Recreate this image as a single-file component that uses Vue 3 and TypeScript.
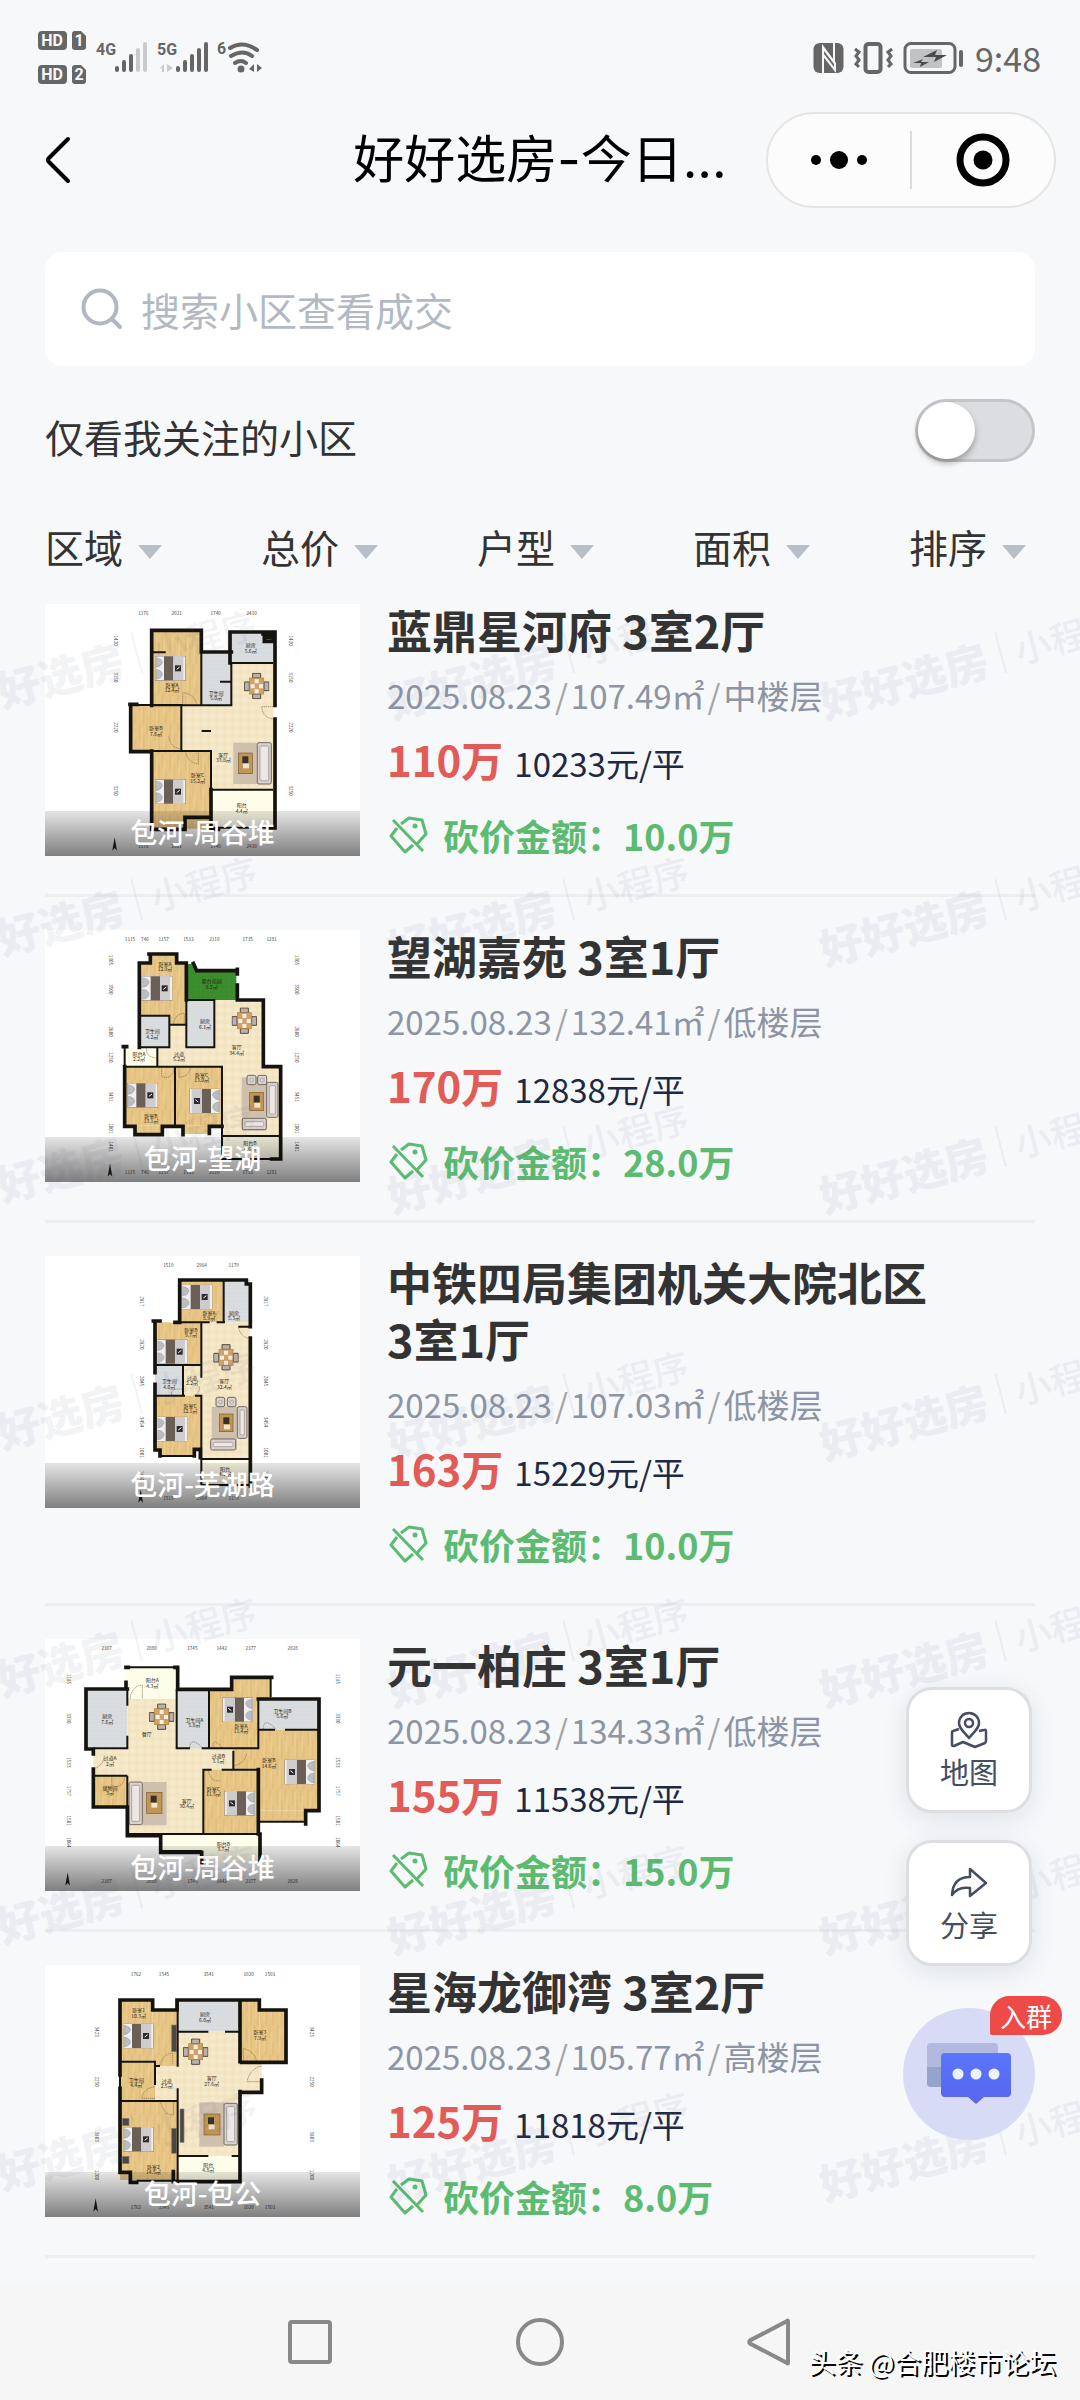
<script setup lang="ts">
import { ref } from 'vue'

type Box = [number, number, number, number]
type Room = [Box, 'wood' | 'tile' | 'stone' | 'ivory' | 'grass']

interface Plan {
  rooms: Room[]
  walls: string
  thin: string
  beds: [number, number, boolean][]
  table: [number, number]
  rug: Box
  coffee: Box
  sofas: Box[]
  extras?: Box[]
  notes: [number, number, string, string][]
  top: [number, string][]
  side: [number, string][]
  sideX: [number, number]
  doors: string
}

interface Listing {
  name: string
  area: string
  size: string
  floor: string
  price: string
  unit: string
  cut: string
  plan: Plan
}

const filters = ['区域', '总价', '户型', '面积', '排序']
const onlyFollowed = ref(false)
const keyword = ref('')

const listings: Listing[] = [
  {
    name: '蓝鼎星河府 3室2厅', area: '包河-周谷堆', size: '107.49㎡', floor: '中楼层', price: '110', unit: '10233', cut: '10.0',
    plan: {
      rooms: [
        [[320, 79, 149, 225], 'wood'], [[469, 144, 90, 160], 'tile'], [[555, 87, 130, 90], 'tile'],
        [[559, 177, 125, 130], 'stone'], [[409, 304, 275, 253], 'stone'], [[257, 301, 152, 140], 'wood'],
        [[320, 441, 178, 233], 'wood'], [[498, 557, 186, 114], 'ivory'],
      ],
      walls: 'M320 304V79H469V144H559M555 177V84H690V304M690 345V672M320 441V676H420V640H490M257 301V443H320M498 557V676H520M690 672H670M255 301H275M654 90H684V112H658V100H684',
      thin: 'M469 144V304H559V177H684M469 304H320M257 303H409V441H320M320 145H362M525 233H559M409 441H498V640M498 381H470M498 557H684M498 671H684',
      beds: [[330, 156, false], [330, 526, false]],
      table: [635, 246], rug: [565, 416, 72, 124], coffee: [580, 447, 42, 62], sofas: [[637, 416, 42, 124]],
      notes: [[381, 249, '卧室A', '12.4㎡'], [333, 379, '卧室B', '7.6㎡'], [458, 520, '卧室C', '15.2㎡'], [513, 272, '卫生间', '5.0㎡'], [617, 130, '厨房', '5.6㎡'], [535, 458, '客厅', '33.8㎡'], [590, 610, '阳台', '4.4㎡']],
      top: [[295, '1176'], [395, '2021'], [512, '1740'], [620, '2410']],
      side: [[110, '1420'], [220, '3150'], [370, '2220'], [560, '3250']],
      sideX: [206, 733],
      doors: 'M413 304V266Q450 270 455 304M409 435Q372 430 372 395M460 441V480Q425 475 422 441M684 308H650Q652 340 684 345',
    },
  },
  {
    name: '望湖嘉苑 3室1厅', area: '包河-望湖', size: '132.41㎡', floor: '低楼层', price: '170', unit: '12838', cut: '28.0',
    plan: {
      rooms: [
        [[283, 97, 141, 190], 'wood'], [[316, 72, 79, 30], 'wood'], [[424, 120, 150, 90], 'grass'], [[424, 102, 26, 30], 'grass'],
        [[283, 257, 90, 95], 'tile'], [[373, 284, 51, 126], 'stone'], [[337, 352, 316, 58], 'stone'], [[508, 210, 145, 200], 'stone'],
        [[424, 210, 84, 142], 'tile'], [[239, 352, 98, 58], 'ivory'], [[239, 410, 151, 177], 'wood'], [[390, 410, 141, 177], 'wood'],
        [[270, 587, 82, 25], 'wood'], [[414, 587, 79, 25], 'wood'], [[531, 410, 176, 208], 'stone'], [[531, 618, 176, 69], 'ivory'],
      ],
      walls: 'M283 352V99H316V72M312 72H395V99H424V210M445 100L455 122H577M577 118V132M577 165V210H655V410H707V687H680M239 410V589H270V614H352V589H414V614M493 610V589H531M235 350H245',
      thin: 'M283 257H373V352H283M424 210H508V352H424ZM373 284H424M239 352V410H531V618H707M390 410V587M337 352V410M531 618V687H707',
      beds: [[290, 138, false], [247, 459, false], [433, 476, true]],
      table: [598, 272], rug: [590, 442, 75, 160], coffee: [614, 487, 41, 55], sofas: [[665, 457, 34, 105], [592, 565, 72, 34], [606, 436, 27, 28], [638, 436, 27, 28]],
      notes: [[360, 108, '卧室A', '12.9㎡'], [500, 160, '露台花园', '8.2㎡'], [322, 310, '卫生间', '4.2㎡'], [480, 280, '厨房', '6.1㎡'], [575, 358, '客厅', '34.4㎡'], [282, 377, '阳台A', '2.2㎡'], [402, 377, '过道', '5.2㎡'], [318, 563, '卧室B', '13.1㎡'], [470, 440, '卧室C', '13.0㎡'], [615, 646, '阳台B', '4.6㎡']],
      top: [[255, '1115'], [300, '746'], [356, '1157'], [430, '1533'], [508, '2110'], [608, '1735'], [680, '1281']],
      side: [[90, '1305'], [178, '3500'], [305, '2600'], [382, '1250'], [500, '3451'], [595, '1001'], [650, '1401']],
      sideX: [192, 750],
      doors: 'M385 284Q390 250 418 250V284M350 410V440Q385 450 388 410M402 412V442Q432 440 436 412M305 352Q300 380 335 385',
    },
  },
  {
    name: '中铁四局集团机关大院北区 3室1厅', area: '包河-芜湖路', size: '107.03㎡', floor: '低楼层', price: '163', unit: '15229', cut: '10.0',
    plan: {
      rooms: [
        [[404, 72, 132, 127], 'wood'], [[536, 72, 78, 127], 'tile'], [[330, 199, 139, 128], 'wood'], [[330, 327, 84, 92], 'tile'],
        [[414, 327, 55, 92], 'stone'], [[330, 419, 139, 160], 'wood'], [[345, 577, 103, 24], 'wood'], [[469, 199, 145, 410], 'stone'], [[469, 609, 145, 78], 'ivory'],
      ],
      walls: 'M404 199V72H604V84H616V212M616 246V690M325 195H345M404 199H390M330 199V350M330 385V582H345V600M448 600V580H466V605',
      thin: 'M404 72V199H494M515 199H540M536 72V199M330 327H469V199M469 327V365M414 327V419M330 419H420M450 419H469V687M469 609H614M469 687H614M345 600H448M580 212H614',
      beds: [[410, 86, false], [335, 250, false], [335, 482, false]],
      table: [543, 304], rug: [500, 452, 76, 130], coffee: [523, 474, 41, 53], sofas: [[577, 452, 29, 95], [497, 549, 75, 33], [513, 424, 26, 28], [547, 424, 26, 28]],
      notes: [[492, 176, '卧室A', '8.9㎡'], [567, 176, '厨房', '5.3㎡'], [438, 228, '卧室B', '9.7㎡'], [373, 382, '卫生间', '4.0㎡'], [441, 372, '过道', '2.2㎡'], [435, 456, '卧室C', '12.1㎡'], [538, 382, '客厅', '32.4㎡'], [540, 645, '阳台', '4.2㎡']],
      top: [[370, '1519'], [470, '2964'], [566, '1179']],
      side: [[136, '2817'], [265, '2820'], [375, '2045'], [498, '3454'], [590, '1001'], [660, '1440']],
      sideX: [284, 658],
      doors: 'M500 199Q515 175 520 165M580 215Q590 245 614 247M445 419Q468 410 462 390M380 419Q375 395 414 400',
    },
  },
  {
    name: '元一柏庄 3室1厅', area: '包河-周谷堆', size: '134.33㎡', floor: '低楼层', price: '155', unit: '11538', cut: '15.0',
    plan: {
      rooms: [
        [[243, 85, 155, 95], 'ivory'], [[123, 150, 124, 175], 'tile'], [[247, 180, 148, 150], 'stone'], [[247, 325, 228, 260], 'stone'],
        [[145, 330, 102, 80], 'stone'], [[395, 328, 170, 64], 'stone'], [[395, 153, 97, 175], 'tile'], [[492, 153, 148, 175], 'wood'],
        [[560, 115, 117, 65], 'wood'], [[640, 180, 182, 92], 'tile'], [[565, 328, 80, 64], 'wood'], [[640, 272, 182, 243], 'wood'],
        [[643, 515, 137, 33], 'wood'], [[475, 392, 165, 193], 'wood'], [[145, 410, 102, 92], 'wood'], [[347, 585, 296, 55], 'ivory'], [[470, 640, 173, 30], 'ivory'],
      ],
      walls: 'M243 85H250M390 85H398V151H560V115H680M640 180H822V515H782V555M247 150H123V330H145V345M145 390V504H247V590H347V640H470V670M640 585H645V672M398 85V151M243 130V150M640 392V585',
      thin: 'M243 85H398M247 150V200M247 290V328H145M247 410H145M395 151V328H435M470 328H640V180M492 151V328M640 272H690M720 272H822M643 548H780M475 585V392H500M530 392H640M247 410V504M565 335V392M243 585H640M347 636H470M677 115V175',
      beds: [[532, 175, true], [718, 362, true], [538, 456, true]],
      table: [350, 233], rug: [292, 429, 73, 130], coffee: [305, 460, 46, 63], sofas: [[252, 429, 40, 128]],
      notes: [[322, 130, '阳台A', '4.3㎡'], [187, 238, '厨房', '7.6㎡'], [305, 290, '餐厅', ''], [448, 248, '卫生间A', '5.8㎡'], [588, 266, '卧室A', '11.4㎡'], [712, 222, '卫生间B', '5.6㎡'], [195, 364, '过道A', '2㎡'], [195, 452, '储物间', '3㎡'], [520, 356, '过道B', '3.1㎡'], [672, 370, '卧室B', '14.6㎡'], [505, 456, '卧室C', '11.5㎡'], [425, 492, '客厅', '30.4㎡'], [535, 620, '阳台B', '3.7㎡']],
      top: [[185, '2307'], [320, '2880'], [442, '1745'], [530, '1442'], [617, '2377'], [743, '2828']],
      side: [[120, '1185'], [238, '3330'], [370, '1533'], [456, '1757'], [545, '1501'], [610, '1064']],
      sideX: [65, 874],
      doors: 'M255 180Q260 140 292 138V180M145 390Q175 380 178 350M435 325Q435 290 475 328M505 328Q500 290 534 328M490 392Q495 430 525 425M565 380Q600 375 605 342M655 272Q655 230 694 272M200 410V440Q235 450 240 410',
    },
  },
  {
    name: '星海龙御湾 3室2厅', area: '包河-包公', size: '105.77㎡', floor: '高楼层', price: '125', unit: '11818', cut: '8.0',
    plan: {
      rooms: [
        [[225, 105, 98, 190], 'wood'], [[323, 135, 75, 168], 'wood'], [[398, 105, 187, 95], 'tile'], [[585, 105, 58, 185], 'wood'], [[643, 135, 80, 155], 'wood'],
        [[225, 290, 105, 118], 'wood'], [[330, 303, 68, 105], 'stone'], [[398, 200, 187, 373], 'stone'], [[583, 295, 67, 85], 'stone'],
        [[225, 408, 173, 237], 'wood'], [[398, 573, 187, 74], 'ivory'],
      ],
      walls: 'M225 330V105H323V135H396V105H585V290M585 105H643V135H723V292H590M225 370V622H256V652H275M385 650V620M585 380V650H398M650 345V382H585',
      thin: 'M398 105V305M398 370V650M398 200H490M540 200H585M225 290H330V303H345M330 303V360M225 408H398M398 573H490M560 573H585M275 647H398M225 330V370',
      beds: [[234, 176, false], [234, 486, false]],
      table: [452, 260], rug: [463, 412, 74, 133], coffee: [477, 447, 48, 63], sofas: [[537, 415, 40, 125]],
      extras: [[380, 180, 14, 80], [405, 432, 12, 100], [380, 490, 14, 75], [232, 460, 20, 22], [232, 574, 20, 22]],
      notes: [[281, 142, '卧室1', '10.3㎡'], [480, 154, '厨房', '6.0㎡'], [645, 208, '卧室3', '7.9㎡'], [274, 350, '卫生间', '4.4㎡'], [365, 354, '过道', '2.5㎡'], [500, 346, '客厅', '27.6㎡'], [325, 612, '卧室2', '14.5㎡'], [490, 606, '阳台', '4.8㎡']],
      top: [[273, '1762'], [357, '1545'], [491, '3541'], [611, '1020'], [675, '1503']],
      side: [[200, '3423'], [350, '2250'], [515, '3803'], [630, '1200']],
      sideX: [149, 796],
      doors: 'M345 300Q355 265 383 265V300M330 400H290Q295 370 330 365M346 408Q355 450 385 450V408M595 290V250Q630 260 635 290M650 303Q615 310 606 350H650',
    },
  },
]

const fillOf = (kind: string) => `url(#${kind})`
</script>

<template>
  <div class="page">
    <svg class="defs" width="0" height="0" aria-hidden="true">
      <defs>
        <pattern id="wood" width="46" height="90" patternUnits="userSpaceOnUse">
          <rect width="46" height="90" fill="#e6c585" />
          <path d="M8 0V50M20 30V90M31 0V40M40 50V90" stroke="#d6ac66" stroke-width="3" opacity=".5" />
          <path d="M14 10V80M35 20V70" stroke="#efd197" stroke-width="5" opacity=".6" />
        </pattern>
        <pattern id="tile" width="12" height="12" patternUnits="userSpaceOnUse">
          <rect width="12" height="12" fill="#dadde0" />
          <path d="M0 0H12M0 0V12" stroke="#c9cdd1" />
        </pattern>
        <pattern id="stone" width="24" height="24" patternUnits="userSpaceOnUse">
          <rect width="24" height="24" fill="#f5e9cb" />
          <path d="M0 12L12 0L24 12L12 24Z" fill="#f3e3be" />
        </pattern>
        <pattern id="ivory" width="8" height="8" patternUnits="userSpaceOnUse"><rect width="8" height="8" fill="#fefde9" /></pattern>
        <pattern id="grass" width="14" height="14" patternUnits="userSpaceOnUse">
          <rect width="14" height="14" fill="#388a2c" />
          <path d="M2 4L5 1M8 10L11 7M3 12L5 9" stroke="#4ba33b" stroke-width="2" />
        </pattern>
      </defs>
      <symbol id="bed" viewBox="0 0 92 74">
        <rect width="92" height="74" fill="#f1eeee" stroke="#75685f" stroke-width="2" />
        <path d="M3 5Q24 10 22 20Q18 32 3 34ZM3 40Q20 42 22 54Q22 66 3 70Z" fill="#b9bdc4" stroke="#7d7e84" />
        <rect x="27" y="1" width="28" height="72" fill="#6b6058" />
        <rect x="55" y="1" width="30" height="72" fill="#cfccd0" />
        <rect x="60" y="28" width="18" height="18" fill="#2e2a2a" /><path d="M65 40L74 33" stroke="#fff" stroke-width="3" />
      </symbol>
      <symbol id="dining" viewBox="0 0 76 80">
        <path d="M26 2H50V16H26ZM26 64H50V78H26ZM1 28H16V54H1ZM60 28H75V54H60Z" fill="#b9b1aa" stroke="#514840" stroke-width="3" />
        <rect x="17" y="16" width="42" height="48" fill="#cda36a" stroke="#a97e47" stroke-width="2" />
        <path d="M32 20H44V32H32ZM20 35H32V47H20ZM45 35H57V47H45ZM32 50H44V62H32Z" fill="#f8eee0" />
      </symbol>
    </svg>

    <header class="status">
      <svg class="status-left" viewBox="38 32 226 54" width="226" height="54" role="img" aria-label="信号与无线网络">
        <g fill="#666">
          <rect x="38" y="32" width="29" height="19" rx="4" /><path d="M75 32H81L86 37V48Q86 51 83 51H75Q72 51 72 48V35Q72 32 75 32Z" />
          <rect x="38" y="66" width="29" height="19" rx="4" /><path d="M75 66H81L86 71V82Q86 85 83 85H75Q72 85 72 82V69Q72 66 75 66Z" />
        </g>
        <g class="tiny" fill="#f7f8fa">
          <text x="52" y="47" text-anchor="middle">HD</text><text x="79" y="47" text-anchor="middle">1</text>
          <text x="52" y="81" text-anchor="middle">HD</text><text x="79" y="81" text-anchor="middle">2</text>
        </g>
        <g class="net" fill="#666"><text x="96" y="56">4G</text><text x="157" y="56">5G</text><text x="217" y="55">6</text></g>
        <g stroke="#666" stroke-width="4" stroke-linecap="round" fill="none">
          <path d="M117 69V71M124 63V71M131 57V71M178 69V71M185 63V71M192 57V71M199 51V71M206 45V71" />
          <path d="M138 51V71M145 45V71" stroke="#c9cacc" />
          <path d="M230 49Q243 41 257 51M231 57Q243 50 252 57M235 64Q241 60 246 64" stroke-width="4" />
        </g>
        <circle cx="241" cy="70" r="3.5" fill="#666" />
        <path d="M249 70L254 65V73M257 65V73L262 69Z" fill="#666" />
        <path d="M159 70L164 65V73H162V69ZM167 65V73L173 69Z" fill="#c9cacc" />
      </svg>
      <div class="status-right">
        <svg viewBox="814 42 152 32" width="152" height="32" role="img" aria-label="NFC、振动、电量">
          <rect x="814.500" y="43" width="30" height="30" rx="6" fill="#666" />
          <path d="M824 73V48L835 64V43" fill="none" stroke="#f7f8fa" stroke-width="2" />
          <path d="M823 44L837 63V73L823 55Z" fill="#f7f8fa" /><path d="M825 51L835 64V67L825 54Z" fill="#666" />
          <rect x="866.500" y="44" width="15" height="28" rx="3" fill="none" stroke="#666" stroke-width="4" />
          <path d="M856 49L860 52L857 56L860 60L857 64L860 67M893 49L889 52L892 56L889 60L892 64L889 67" fill="none" stroke="#666" stroke-width="3" />
          <rect x="906" y="43.500" width="50" height="29" rx="6" fill="none" stroke="#666" stroke-width="3" />
          <rect x="911" y="49" width="32" height="19" rx="2" fill="#bfc3c3" />
          <path d="M924 57L938 50L936 55H948L935 62L937 57ZM914 63L924 59L922 62H930L921 67L922 63Z" fill="#4b4b4b" />
          <rect x="960" y="50" width="4" height="17" rx="2" fill="#666" />
        </svg>
        <time>9:48</time>
      </div>
    </header>

    <nav class="bar">
      <button class="back" aria-label="返回">
        <svg viewBox="0 0 26 48" width="26" height="48"><path d="M23 3L3.500 22.500Q2 24 3.500 25.500L23 45" fill="none" stroke="#000" stroke-width="4" stroke-linecap="round" /></svg>
      </button>
      <h1>好好选房-今日...</h1>
      <div class="capsule">
        <button aria-label="更多">
          <svg viewBox="0 0 60 20" width="60" height="20"><circle cx="7" cy="10" r="5" /><circle cx="30" cy="10" r="9" /><circle cx="53" cy="10" r="5" /></svg>
        </button>
        <i></i>
        <button aria-label="关闭">
          <svg viewBox="0 0 54 54" width="54" height="54"><circle cx="27" cy="27" r="23" fill="none" stroke="#000" stroke-width="7" /><circle cx="27" cy="27" r="9.500" /></svg>
        </button>
      </div>
    </nav>

    <label class="search">
      <svg viewBox="0 0 42 42" width="42" height="42" aria-hidden="true"><circle cx="19" cy="19" r="16.500" fill="none" stroke="#b0b7c0" stroke-width="4" /><path d="M31 31L39 39" stroke="#b0b7c0" stroke-width="4" stroke-linecap="round" /></svg>
      <input v-model="keyword" type="text" placeholder="搜索小区查看成交" aria-label="搜索小区查看成交" />
    </label>

    <label class="follow">
      <span>仅看我关注的小区</span>
      <input v-model="onlyFollowed" type="checkbox" role="switch" />
    </label>

    <div class="filters">
      <label v-for="f in filters" :key="f">
        <select :aria-label="f"><option>{{ f }}</option></select>
      </label>
    </div>

    <main>
      <ul class="list">
        <li v-for="item in listings" :key="item.name">
          <figure>
            <svg viewBox="0 0 945 756" aria-hidden="true">
              <rect v-for="([b, kind], i) in item.plan.rooms" :key="i" :x="b[0]" :y="b[1]" :width="b[2]" :height="b[3]" :fill="fillOf(kind)" />
              <path :d="item.plan.doors" fill="none" stroke="#7b6a4c" stroke-width="2" stroke-dasharray="4 2" />
              <rect :x="item.plan.rug[0]" :y="item.plan.rug[1]" :width="item.plan.rug[2]" :height="item.plan.rug[3]" fill="#cfc0ae" />
              <g v-for="(s, i) in item.plan.sofas" :key="'s' + i">
                <rect :x="s[0]" :y="s[1]" :width="s[2]" :height="s[3]" rx="5" fill="#d8d0cc" stroke="#746863" stroke-width="3" />
                <rect :x="s[0] + 8" :y="s[1] + 10" :width="s[2] - 16" :height="s[3] - 20" rx="3" fill="#ece7e4" stroke="#958a85" stroke-width="2" />
              </g>
              <rect :x="item.plan.coffee[0]" :y="item.plan.coffee[1]" :width="item.plan.coffee[2]" :height="item.plan.coffee[3]" fill="#bf9653" stroke="#7c5c2c" stroke-width="2" />
              <rect :x="item.plan.coffee[0] + 12" :y="item.plan.coffee[1] + 10" width="18" height="20" fill="#37312a" />
              <rect :x="item.plan.coffee[0] + 14" :y="item.plan.coffee[1] + 32" width="18" height="14" fill="#efe5d2" />
              <use :x="item.plan.table[0] - 38" :y="item.plan.table[1] - 40" href="#dining" width="76" height="80" />
              <use v-for="([x, y, flip], i) in item.plan.beds" :key="'b' + i" href="#bed" width="92" height="74" :transform="flip ? `translate(${x + 92} ${y}) scale(-1 1)` : `translate(${x} ${y})`" />
              <rect v-for="(e, i) in item.plan.extras ?? []" :key="'e' + i" :x="e[0]" :y="e[1]" :width="e[2]" :height="e[3]" fill="#4a4745" stroke="#8d8276" stroke-width="2" />
              <path :d="item.plan.thin" fill="none" stroke="#15130f" stroke-width="6" />
              <path :d="item.plan.walls" fill="none" stroke="#15130f" stroke-width="11" stroke-linecap="square" />
              <g class="note" text-anchor="middle">
                <template v-for="([x, y, a, b], i) in item.plan.notes" :key="'n' + i"><text :x="x" :y="y">{{ a }}</text><text v-if="b" :x="x" :y="y + 16">{{ b }}</text></template>
              </g>
              <g class="dim" text-anchor="middle">
                <template v-for="([x, t], i) in item.plan.top" :key="'t' + i"><text :x="x" y="34">{{ t }}</text><text :x="x" y="731">{{ t }}</text></template>
                <template v-for="([y, t], i) in item.plan.side" :key="'d' + i">
                  <text :transform="`translate(${item.plan.sideX[0]} ${y}) rotate(90)`">{{ t }}</text>
                  <text :transform="`translate(${item.plan.sideX[1]} ${y}) rotate(90)`">{{ t }}</text>
                </template>
              </g>
              <path :d="`M${item.plan.sideX[0] + 3} 700L${item.plan.sideX[0] - 4} 740L${item.plan.sideX[0] + 3} 732L${item.plan.sideX[0] + 10} 740Z`" fill="#222" />
            </svg>
            <figcaption>{{ item.area }}</figcaption>
          </figure>
          <div class="info">
            <h2>{{ item.name }}</h2>
            <p class="meta">2025.08.23<i>/</i>{{ item.size }}<i>/</i>{{ item.floor }}</p>
            <p class="price"><strong>{{ item.price }}万</strong><span>{{ item.unit }}元/平</span></p>
            <p class="cut">
              <svg viewBox="0 0 39 38" width="39" height="38" aria-hidden="true">
                <g fill="none" stroke="#5cbb70" stroke-width="3"><path d="M4 4L34 35M12 8L20 2L33 4L37 18L28 28M8 12L2 20L16 36L24 29" stroke-linejoin="round" /></g>
                <circle cx="26" cy="10" r="2.500" fill="#5cbb70" />
              </svg>
              <span>砍价金额：{{ item.cut }}万</span>
            </p>
          </div>
        </li>
      </ul>
      <div class="watermark" aria-hidden="true">
        <span v-for="n in 21" :key="n"><b>好好选房</b><i></i><em>小程序</em></span>
      </div>
    </main>

    <footer>
      <button aria-label="最近任务"><svg viewBox="0 0 48 48" width="48" height="48"><rect x="4" y="4" width="40" height="40" rx="2" /></svg></button>
      <button aria-label="主页"><svg viewBox="0 0 48 48" width="48" height="48"><circle cx="24" cy="24" r="22" /></svg></button>
      <button aria-label="后退"><svg viewBox="0 0 48 48" width="48" height="48"><path d="M42 3V45Q42 46 41 45L4 25.500Q2.500 24 4 22.500L41 3Q42 2 42 3Z" /></svg></button>
      <p>头条 @合肥楼市论坛</p>
    </footer>

    <aside>
      <button class="tool">
        <svg viewBox="0 0 38 38" width="38" height="38" aria-hidden="true"><g fill="none" stroke="#454d60" stroke-width="2.500" stroke-linejoin="round"><path d="M19 27C13 20 9 17 9 12A10 10 0 0 1 29 12C29 17 25 20 19 27Z" /><circle cx="19" cy="12" r="4" /><path d="M9 18L3 20Q2 20 2 22V34Q2 35 4 35L13 31L25 36L35 32Q36 31 36 30V20Q36 18 34 19L29 20" /></g></svg>
        地图
      </button>
      <button class="tool">
        <svg viewBox="0 0 38 38" width="38" height="38" aria-hidden="true"><path d="M20 5L36 19L20 32V24Q8 22 2 31Q3 13 20 13Z" fill="none" stroke="#454d60" stroke-width="2.500" stroke-linejoin="round" /></svg>
        分享
      </button>
      <button class="chat">
        <svg viewBox="0 0 84 62" width="84" height="62" aria-hidden="true">
          <defs><linearGradient id="bubble" x1="0" y1="0" x2="0" y2="1"><stop offset="0" stop-color="#5a76fb" /><stop offset="1" stop-color="#5865ee" /></linearGradient></defs>
          <rect x="0" y="0" width="71" height="44" rx="4" fill="#b1bade" /><path d="M0 24H14V44H4Q0 44 0 40Z" fill="#96a3cd" />
          <path d="M18 10H80Q84 10 84 14V50Q84 54 80 54H57L49 61L41 54H18Q14 54 14 50V14Q14 10 18 10Z" fill="url(#bubble)" />
          <g fill="#eef1ff"><circle cx="31" cy="31" r="5.500" /><circle cx="49" cy="31" r="5.500" /><circle cx="67" cy="31" r="5.500" /></g>
        </svg>
        <span>入群</span>
      </button>
    </aside>
  </div>
</template>

<style>
body {
  background: #f6f8fa;
}
</style>

<style scoped>
* {
  box-sizing: border-box;
}

.page {
  position: relative;
  display: flex;
  flex-direction: column;
  min-height: 100vh;
  background: #f6f8fa;
  color: #333;
  font-family: "Noto Sans CJK SC", "Noto Sans", sans-serif;
}

h1, h2, p, ul, figure {
  margin: 0;
  padding: 0;
}

button, input, select {
  font: inherit;
  color: inherit;
  background: none;
  border: 0;
  padding: 0;
}

svg {
  display: block;
  flex: none;
}

.defs {
  position: absolute;
}

.status {
  display: flex;
  justify-content: space-between;
  align-items: center;
  height: 92px;
  padding: 24px 39px 0 38px;
}

.status-right {
  display: flex;
  align-items: center;
  gap: 10px;
  color: #666;
  font-size: 34px;
  line-height: 40px;
}

.tiny {
  font: bold 16px Roboto, sans-serif;
}

.net {
  font: bold 16px "Liberation Sans Narrow", Roboto, sans-serif;
}

.bar {
  display: grid;
  grid-template-columns: 1fr auto 1fr;
  align-items: center;
  height: 136px;
  padding: 0 24px;
}

.bar h1 {
  color: #000;
  font-family: Inter, "Noto Sans CJK SC", sans-serif;
  font-size: 51px;
  font-weight: 400;
  line-height: 64px;
}

.back {
  justify-self: start;
  margin-left: 21px;
}

.capsule {
  justify-self: end;
  display: flex;
  align-items: center;
  width: 290px;
  height: 96px;
  border: 2px solid #e4e5e6;
  border-radius: 48px;
  background: #fcfcfd;
}

.capsule button {
  flex: 1;
  display: flex;
  justify-content: center;
}

.capsule i {
  width: 2px;
  height: 58px;
  background: #dcdcdc;
}

.search {
  display: flex;
  align-items: center;
  gap: 18px;
  height: 114px;
  margin: 24px 45px 0;
  padding: 0 36px;
  border-radius: 18px;
  background: #fff;
}

.search input {
  flex: 1;
  min-width: 0;
  font-size: 39px;
  line-height: 57px;
  outline: 0;
}

.search input::placeholder {
  color: #b3b9c3;
  opacity: 1;
}

.follow {
  display: flex;
  justify-content: space-between;
  align-items: flex-end;
  margin: 33px 45px 0;
  font-size: 39px;
  line-height: 51px;
}

.follow input {
  appearance: none;
  display: flex;
  width: 120px;
  height: 63px;
  margin: 0;
  border: 3px solid #c4c5c8;
  border-radius: 32px;
  background: #dcdde1;
}

.follow input::before {
  content: "";
  width: 57px;
  height: 57px;
  border-radius: 50%;
  background: #fff;
  box-shadow: 0 4px 6px rgba(0, 0, 0, 0.3);
}

.follow input:checked {
  justify-content: flex-end;
  background: #5cbb70;
}

.filters {
  display: grid;
  grid-template-columns: repeat(5, 1fr);
  margin: 61px -45px 2px 0;
  padding-left: 45px;
  font-size: 39px;
  line-height: 46px;
}

.filters label {
  display: flex;
  align-items: center;
  gap: 14px;
}

.filters select {
  appearance: none;
  height: 46px;
}

.filters label::after {
  content: "";
  margin-top: 12px;
  border: 12px solid transparent;
  border-top: 14px solid #b6bfc7;
  border-bottom: 0;
}

main {
  position: relative;
  flex: 1;
  overflow: hidden;
  padding: 0 45px 25px;
}

.list {
  list-style: none;
}

.list li {
  display: flex;
  align-items: flex-start;
  gap: 27px;
  padding: 33px 0 35px;
  border-bottom: 3px solid #eceef0;
}

figure {
  position: relative;
  flex: none;
  width: 315px;
  background: #fff;
}

figure svg {
  width: 100%;
}

figcaption {
  position: absolute;
  inset: auto 0 0;
  padding-bottom: 4px;
  background: linear-gradient(rgba(0, 0, 0, 0.1), rgba(0, 0, 0, 0.5));
  color: #fff;
  font-size: 27px;
  font-weight: 500;
  line-height: 41px;
  text-align: center;
}

.note {
  font-size: 15px;
  fill: #2c2417;
}

.dim {
  font-size: 14px;
  fill: #444;
}

.info {
  flex: 1;
  min-width: 0;
  margin-top: -3px;
}

h2 {
  max-width: 560px;
  font-size: 45px;
  font-weight: 700;
  line-height: 57px;
}

.meta {
  margin-top: 15px;
  color: #8d94a3;
  font-size: 33px;
  line-height: 45px;
}

.meta i {
  margin: 0 3px;
  color: #a3a3a3;
  font-style: normal;
}

.price {
  display: flex;
  align-items: baseline;
  gap: 11px;
  height: 48px;
  margin-top: 17px;
  line-height: 48px;
}

.price strong {
  color: #e25b57;
  font-size: 42px;
}

.price span {
  color: #1e2943;
  font-size: 33px;
}

.cut {
  display: flex;
  align-items: center;
  gap: 15px;
  margin-top: 28px;
  padding-left: 2px;
  color: #5cbb70;
  font-size: 36px;
  font-weight: 700;
  line-height: 48px;
}

.watermark {
  position: absolute;
  inset: 0 -300px 0 -44px;
  display: grid;
  grid-template-columns: repeat(3, 432px);
  grid-auto-rows: 247px;
  align-content: start;
  align-items: center;
  padding-top: 6px;
  color: #5a5f82;
  opacity: 0.07;
  pointer-events: none;
}

.watermark span {
  display: flex;
  align-items: center;
  transform: rotate(-15deg);
  transform-origin: left center;
  line-height: 48px;
}

.watermark b {
  font-size: 43px;
  font-weight: 900;
}

.watermark i {
  width: 2px;
  height: 42px;
  margin: 0 14px;
  background: #5a5f82;
}

.watermark em {
  font-size: 36px;
  font-style: normal;
  font-weight: 500;
}

footer {
  position: relative;
  display: flex;
  justify-content: center;
  align-items: center;
  gap: 182px;
  height: 117px;
  background: #f6f6f6;
}

footer svg {
  fill: none;
  stroke: #898989;
  stroke-width: 4;
}

footer p {
  position: absolute;
  right: 24px;
  bottom: 20px;
  color: #fff;
  font-size: 27px;
  line-height: 36px;
  text-shadow: 2px 2px 0 #000;
}

aside {
  position: absolute;
  right: 45px;
  bottom: 260px;
  display: flex;
  flex-direction: column;
  align-items: center;
}

.tool {
  display: flex;
  flex-direction: column;
  align-items: center;
  justify-content: center;
  gap: 4px;
  width: 126px;
  height: 126px;
  margin-bottom: 27px;
  border: 3px solid #dddee2;
  border-radius: 26px;
  background: #fff;
  box-shadow: 0 6px 24px rgba(60, 70, 110, 0.12);
  color: #454d60;
  font-size: 29px;
  line-height: 36px;
}

.chat {
  position: relative;
  display: flex;
  align-items: center;
  justify-content: center;
  width: 132px;
  height: 132px;
  margin-top: 15px;
  border-radius: 50%;
  background: #d8dbf6;
}

.chat span {
  position: absolute;
  top: -12px;
  right: -27px;
  width: 72px;
  border-radius: 20px 20px 20px 2px;
  background: #ee4a48;
  color: #fff;
  font-size: 26px;
  line-height: 39px;
}
</style>
